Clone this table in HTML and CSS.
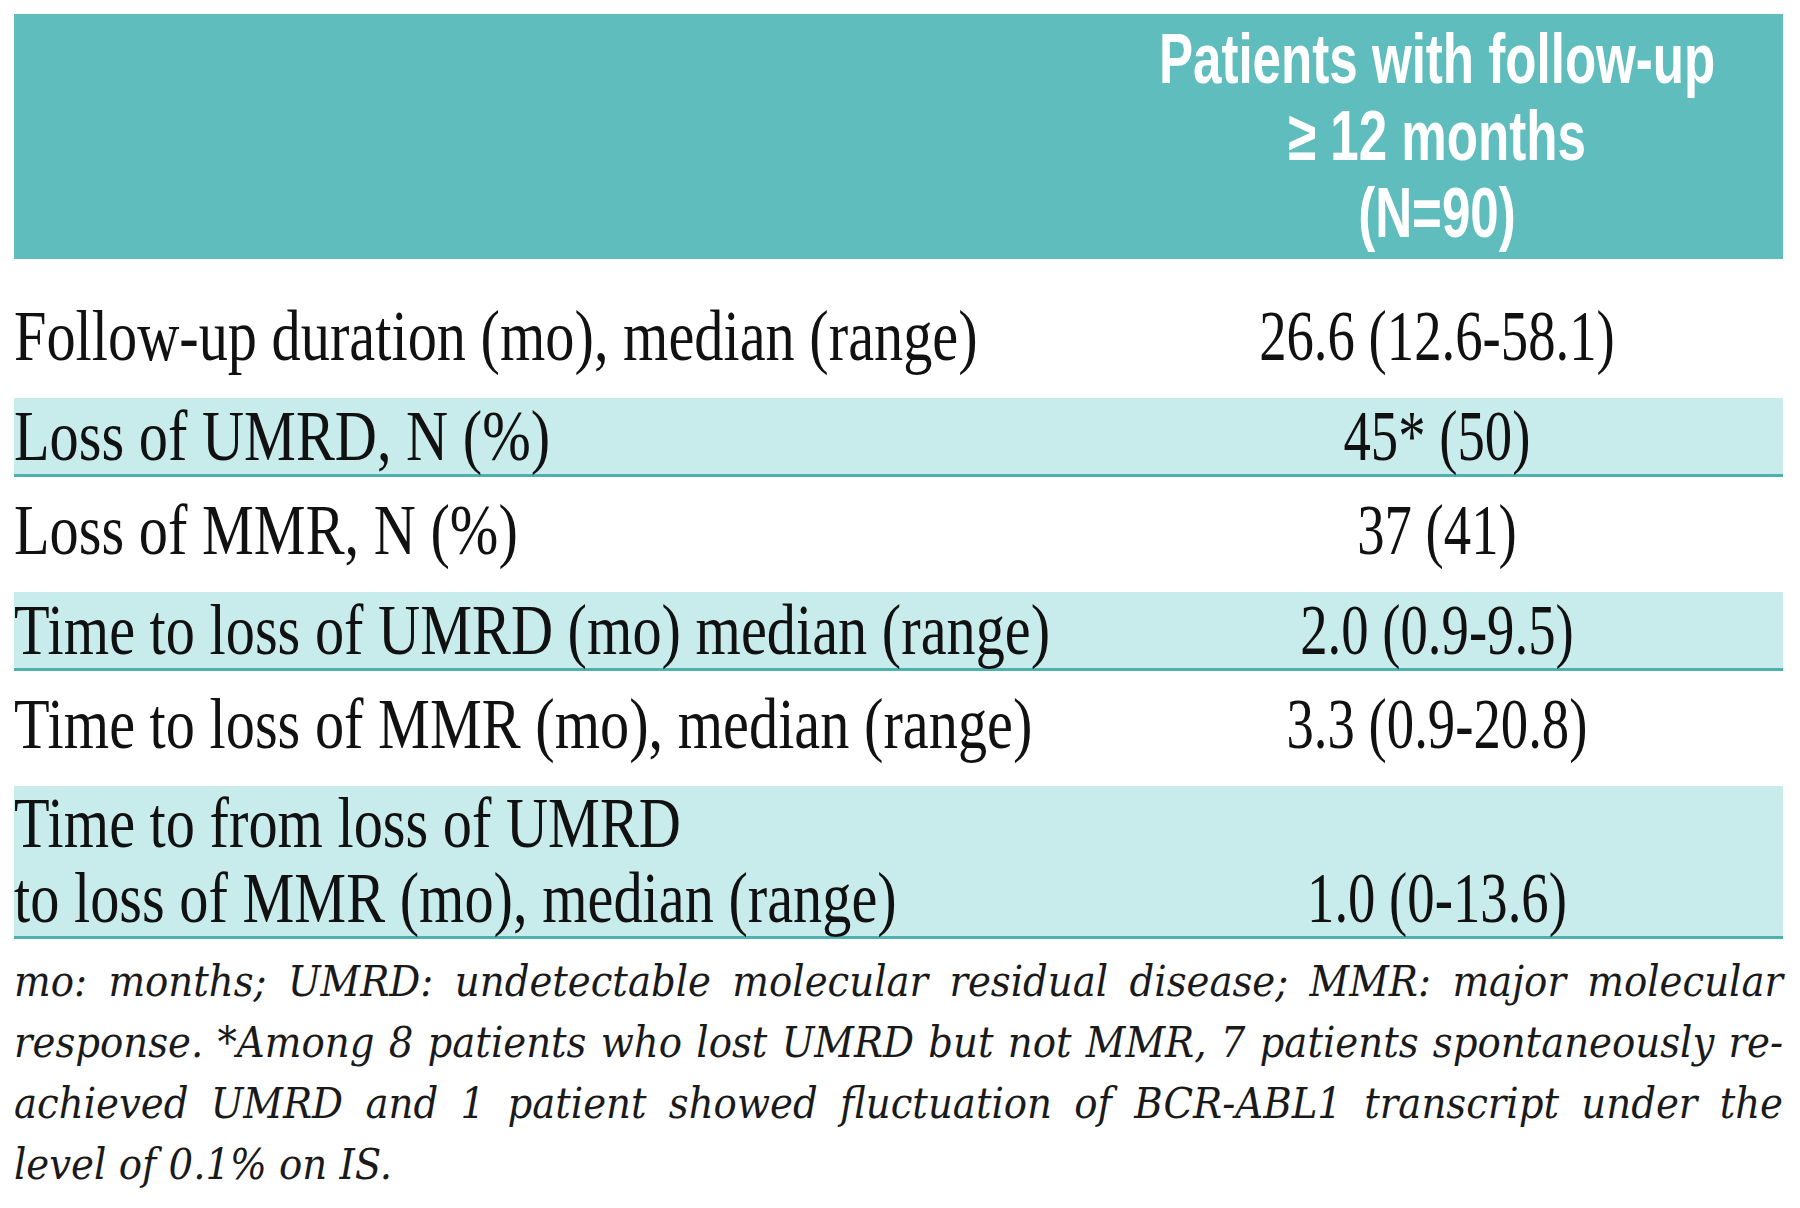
FILE: index.html
```html
<!DOCTYPE html>
<html lang="en">
<head>
<meta charset="utf-8">
<title>Loss of UMRD and MMR</title>
<link rel="stylesheet" href="styles.css">
</head>
<body>
<div class="page">
  <div class="table">
    <div class="head">
      <div class="head-label"></div>
      <div class="head-value">
        <span class="hline">Patients with follow-up</span>
        <span class="hline">≥ 12 months</span>
        <span class="hline">(N=90)</span>
      </div>
    </div>
    <div class="row plain first">
      <div class="label"><span class="t">Follow-up duration (mo), median (range)</span></div>
      <div class="value"><span class="t">26.6 (12.6-58.1)</span></div>
    </div>
    <div class="row shaded">
      <div class="label"><span class="t">Loss of UMRD, N (%)</span></div>
      <div class="value"><span class="t">45* (50)</span></div>
    </div>
    <div class="row plain">
      <div class="label"><span class="t">Loss of MMR, N (%)</span></div>
      <div class="value"><span class="t">37 (41)</span></div>
    </div>
    <div class="row shaded">
      <div class="label"><span class="t">Time to loss of UMRD (mo) median (range)</span></div>
      <div class="value"><span class="t">2.0 (0.9-9.5)</span></div>
    </div>
    <div class="row plain">
      <div class="label"><span class="t">Time to loss of MMR (mo), median (range)</span></div>
      <div class="value"><span class="t">3.3 (0.9-20.8)</span></div>
    </div>
    <div class="row shaded double">
      <div class="label"><span class="t">Time to from loss of UMRD</span><span class="t">to loss of MMR (mo), median (range)</span></div>
      <div class="value"><span class="t">1.0 (0-13.6)</span></div>
    </div>
  </div>
  <div class="note">
    <p class="nl">mo: months; UMRD: undetectable molecular residual disease; MMR: major molecular</p>
    <p class="nl">response. *Among 8 patients who lost UMRD but not MMR, 7 patients spontaneously re-</p>
    <p class="nl">achieved UMRD and 1 patient showed fluctuation of BCR-ABL1 transcript under the</p>
    <p class="nl last">level of 0.1% on IS.</p>
  </div>
</div>
</body>
</html>
```
FILE: styles.css
```css
html, body {
  margin: 0;
  padding: 0;
  background: #ffffff;
}

.page {
  padding: 14px 17px 0 14px;
  color: #111111;
}

.table {
  display: flex;
  flex-direction: column;
}

.head,
.row {
  display: grid;
  grid-template-columns: 1077px 1fr;
}

.head {
  height: 245px;
  background: #5fbdbd;
  margin-bottom: 24px;
}

.head-value {
  display: flex;
  flex-direction: column;
  align-items: center;
  justify-content: center;
  margin: 0 -80px;
}

.hline {
  display: block;
  font-family: "Liberation Sans", Arial, sans-serif;
  font-weight: bold;
  font-size: 70px;
  line-height: 77px;
  color: #ffffff;
  white-space: nowrap;
  transform: scaleX(0.73);
  transform-origin: center center;
}

.row {
  box-sizing: border-box;
  font-family: "Liberation Serif", "Times New Roman", serif;
  font-size: 72px;
  line-height: 76px;
}

.row.plain {
  height: 115px;
  padding-bottom: 10px;
  align-items: center;
}

.row.shaded {
  height: 79px;
  padding-bottom: 9px;
  background: #c8ebeb;
  border-bottom: 3px solid #4fb0b0;
  align-items: center;
}

.row.double {
  height: 153px;
  padding-bottom: 10px;
  align-items: end;
}

.label {
  display: flex;
  flex-direction: column;
  align-items: flex-start;
}

.value {
  display: flex;
  flex-direction: column;
  align-items: center;
}

.t {
  display: block;
  white-space: nowrap;
}

.label .t {
  transform: scaleX(0.81);
  transform-origin: left center;
}

.value .t {
  transform: scaleX(0.76);
  transform-origin: center center;
}

.row.double .label .t {
  line-height: 75px;
}

.note {
  margin-top: 12px;
  font-family: "DejaVu Serif Condensed", "DejaVu Serif", serif;
  font-stretch: condensed;
  font-style: italic;
  font-size: 43px;
  line-height: 61px;
  color: #1a1a1a;
}

.nl {
  margin: 0;
  text-align: justify;
  text-align-last: justify;
  white-space: nowrap;
}

.nl.last {
  text-align-last: left;
}
```
